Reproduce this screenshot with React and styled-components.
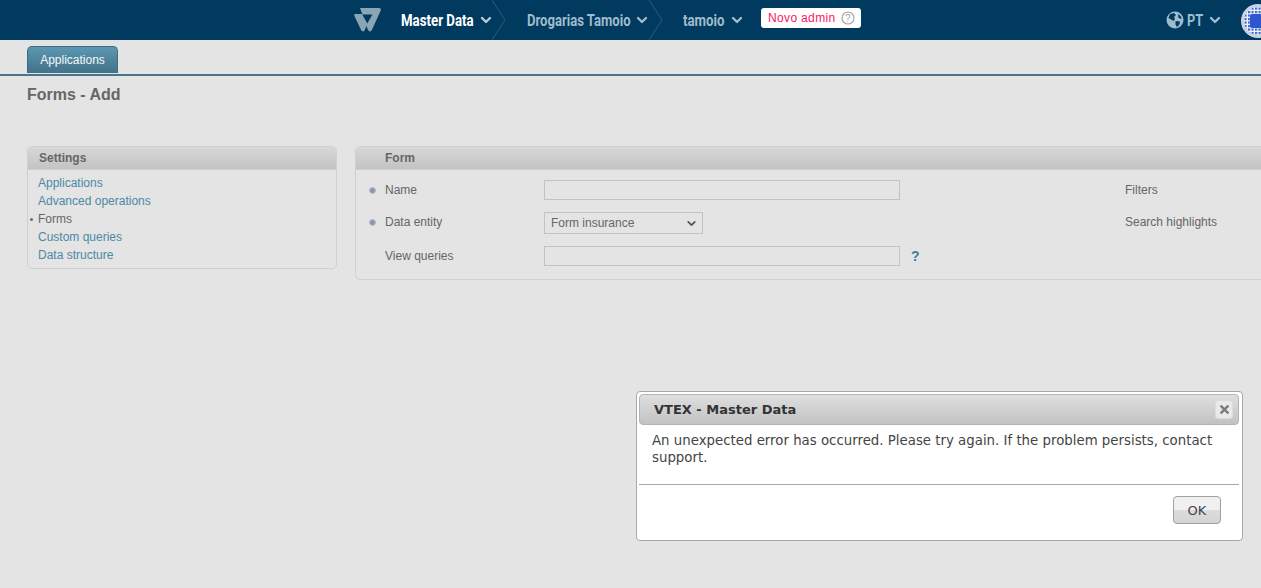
import styled, { createGlobalStyle } from "styled-components";
import { ChevronDown } from "lucide-react";
import { FaTimes } from "react-icons/fa";

const GlobalStyle = createGlobalStyle`
  html, body {
    margin: 0;
    height: 100%;
    overflow: hidden;
    background: #e4e4e4;
    font-family: "Liberation Sans", Arial, sans-serif;
  }
`;

const TopBar = styled.header`
  height: 40px;
  background: #003a5f;
  display: flex;
  align-items: center;
  padding-left: 354px;
  overflow: hidden;
`;

const Crumb = styled.div`
  display: flex;
  align-items: center;
  gap: 3px;
  height: 40px;
  margin-left: ${(p) => p.$left}px;
  color: ${(p) => (p.$active ? "#ffffff" : "#9fbccd")};
  white-space: nowrap;

  svg {
    color: ${(p) => (p.$active ? "#b7cbd8" : "#9fbccd")};
  }
`;

/* no condensed face is installed, so the header text is squeezed to the width it needs */
const CrumbText = styled.span`
  display: inline-block;
  width: ${(p) => p.$width}px;
  font-family: "Roboto", sans-serif;
  font-size: 17px;
  font-weight: 700;
  transform: scaleX(${(p) => p.$squeeze});
  transform-origin: left center;
`;

const Arrow = styled.svg`
  flex: none;
  width: 14px;
  height: 40px;
  margin-left: ${(p) => p.$left}px;
`;

const Badge = styled.div`
  display: flex;
  align-items: center;
  gap: 5px;
  height: 20px;
  width: 100px;
  box-sizing: border-box;
  margin: -4px 0 0 16px;
  padding-left: 7px;
  background: #fff;
  border-radius: 3px;
  color: #f71963;
  font-size: 12px;
  letter-spacing: 0.35px;
  white-space: nowrap;
`;

const RightGroup = styled.div`
  display: flex;
  align-items: center;
  margin-left: auto;
  margin-right: -14px;
`;

const Language = styled(Crumb)`
  margin-left: 0;
`;

const Avatar = styled.svg`
  width: 34px;
  height: 34px;
  margin: 2px 0 0 18px;
  flex: none;
`;

const TabBar = styled.nav`
  height: 28px;
  padding: 6px 0 0 27px;
  border-bottom: 2px solid #4a7488;
`;

const Tab = styled.div`
  width: 91px;
  height: 27px;
  box-sizing: border-box;
  background: linear-gradient(#5c97b1, #427289);
  border: 1px solid #3f6c82;
  border-bottom: 0;
  border-radius: 5px 5px 0 0;
  color: #f4f8fa;
  font-size: 12px;
  line-height: 26px;
  text-align: center;
`;

const Title = styled.h1`
  margin: 10px 0 0 27px;
  color: #666;
  font-size: 16px;
  line-height: 18px;
  font-weight: 700;
`;

const Columns = styled.main`
  display: flex;
  align-items: flex-start;
  gap: 18px;
  margin: 42px 0 0 27px;
`;

const Panel = styled.section`
  flex: none;
  width: ${(p) => p.$width}px;
  height: ${(p) => p.$height}px;
  box-sizing: border-box;
  border: 1px solid #d0d0d0;
  border-radius: 5px;
  overflow: hidden;
`;

const PanelHead = styled.h2`
  margin: 0;
  height: 23px;
  box-sizing: border-box;
  padding-left: ${(p) => p.$indent}px;
  background: linear-gradient(#d8d8d8, #c3c3c3);
  border-bottom: 1px solid #cfcfcf;
  color: #666;
  font-size: 12px;
  font-weight: 700;
  line-height: 22px;
`;

const Menu = styled.ul`
  list-style: none;
  margin: 0;
  padding: 4px 0 0 10px;
`;

const MenuItem = styled.li`
  position: relative;
  height: 18px;
  color: ${(p) => (p.$current ? "#666" : "#4b89a5")};
  font-size: 12px;
  line-height: 18px;

  ${(p) =>
    p.$current &&
    `&::before {
      content: "";
      position: absolute;
      left: -8px;
      top: 8px;
      width: 3px;
      height: 3px;
      border-radius: 50%;
      background: #5c7280;
    }`}
`;

const FormGrid = styled.div`
  display: grid;
  grid-template-columns: 159px 356px 1fr;
  align-items: start;
  row-gap: 12px;
  padding: 10px 0 0 29px;
`;

const Field = styled.div`
  display: flex;
  align-items: center;
  height: 20px;
  min-width: 0;
`;

const Label = styled.label`
  position: relative;
  color: #666;
  font-size: 12px;
  margin-top: -1px;

  ${(p) =>
    p.$required &&
    `&::before {
      content: "";
      position: absolute;
      left: -16px;
      top: 4px;
      width: 7px;
      height: 7px;
      box-sizing: border-box;
      border-radius: 50%;
      background: #8b97a8;
      border: 1px solid #b9c0c9;
    }`}
`;

const TextInput = styled.input`
  width: 356px;
  height: 20px;
  box-sizing: border-box;
  background: #e4e4e4;
  border: 1px solid #c2c2c2;
  padding: 0 6px;
  outline: none;
`;

const SelectBox = styled.div`
  display: flex;
  align-items: center;
  justify-content: space-between;
  width: 159px;
  height: 22px;
  box-sizing: border-box;
  border: 1px solid #c2c2c2;
  padding: 0 4px 0 6px;
  color: #666;
  font-size: 12px;
`;

const SideLabel = styled.div`
  color: #666;
  font-size: 12px;
  margin: -1px 0 0 225px;
  white-space: nowrap;
`;

const Help = styled.span`
  margin-left: 11px;
  color: #3d7f9f;
  font-size: 14px;
  font-weight: 700;
`;

const Modal = styled.div`
  position: fixed;
  left: 636px;
  top: 391px;
  width: 607px;
  height: 150px;
  box-sizing: border-box;
  padding: 2px 3px 2px 2px;
  background: #fff;
  border: 1px solid #a8a8a8;
  border-radius: 4px;
  font-family: "DejaVu Sans", Verdana, sans-serif;
  display: flex;
  flex-direction: column;
`;

const ModalHead = styled.div`
  display: flex;
  align-items: center;
  justify-content: space-between;
  height: 31px;
  box-sizing: border-box;
  padding: 0 5px 0 14px;
  background: linear-gradient(#dfdfdf, #c2c2c2);
  border: 1px solid #b4b4b4;
  border-radius: 4px;
  color: #333;
  font-size: 13px;
  font-weight: 700;
`;

const CloseButton = styled.button`
  display: grid;
  place-items: center;
  width: 18px;
  height: 19px;
  padding: 0;
  background: #e9e9e9;
  border: 1px solid #dcdcdc;
  border-radius: 3px;
  color: #7a7a7a;
`;

const ModalText = styled.p`
  margin: 0;
  height: 60px;
  box-sizing: border-box;
  padding: 7px 14px 0 13px;
  border-bottom: 1px solid #a9a9a9;
  color: #444;
  font-size: 13.33px;
  line-height: 17px;
`;

const ModalFoot = styled.div`
  display: flex;
  justify-content: flex-end;
  padding: 11px 18px 0 0;
`;

const OkButton = styled.button`
  width: 48px;
  height: 28px;
  background: linear-gradient(#f0f0f0 50%, #dcdcdc 50%, #d4d4d4);
  border: 1px solid #a0a0a0;
  border-radius: 4px;
  color: #444;
  font-family: inherit;
  font-size: 13px;
`;

const Logo = () => (
  <svg width="27" height="24" viewBox="0 0 27 24">
    <path
      d="M6 0H25C26.600 0 27.300 1.300 26.600 2.700L18 21.800C17 24 15 24 14 21.800L12 17.500 18.500 6.500H8.500Z"
      fill="#8aa5b8"
    />
    <path
      d="M1.200 6H8L13.200 15.500 11 21.800C10 24 8 24 7 21.800L.4 8C0 7 .3 6 1.200 6Z"
      fill="#8aa5b8"
    />
  </svg>
);

const Separator = ({ left }) => (
  <Arrow $left={left} viewBox="0 0 14 40">
    <path d="M0 0 13 20 0 40" fill="none" stroke="#2d5a78" strokeWidth="1" />
  </Arrow>
);

const Chevron = () => <ChevronDown size={16} strokeWidth={3.6} />;

const Globe = () => (
  <svg width="18" height="18" viewBox="0 0 18 18">
    <circle cx="9" cy="9" r="8.500" fill="#9fbccd" />
    <path
      d="M4 3 8 2 10 4 8 6 9 8 7.500 10 5 8.500 2.500 7ZM9.500 10 14 10.500 13.500 13.500 11 16 9.500 13.500ZM12 3 15 5.500 15.500 8 12.500 7Z"
      fill="#003a5f"
    />
  </svg>
);

const HelpIcon = () => (
  <svg width="14" height="14" viewBox="0 0 14 14">
    <circle cx="7" cy="7" r="6" fill="none" stroke="#a8a8a8" strokeWidth="1.200" />
    <text x="7" y="10.500" textAnchor="middle" fontSize="10" fill="#a8a8a8" fontFamily="Liberation Sans">
      ?
    </text>
  </svg>
);

const AvatarIcon = () => (
  <Avatar viewBox="0 0 34 34">
    <defs>
      <pattern id="dots" width="3.500" height="3.500" patternUnits="userSpaceOnUse">
        <rect width="3.500" height="3.500" fill="#f2f5fb" />
        <rect width="2.200" height="2.200" fill="#3d64cf" />
      </pattern>
    </defs>
    <circle cx="17" cy="17" r="17" fill="#c9d4e0" />
    <circle cx="17" cy="17" r="14" fill="url(#dots)" />
    <rect x="9" y="10" width="16" height="14" rx="2" fill="#2f55cf" />
  </Avatar>
);

const menuItems = [
  { name: "Applications" },
  { name: "Advanced operations" },
  { name: "Forms", current: true },
  { name: "Custom queries" },
  { name: "Data structure" },
];

export default function App() {
  return (
    <>
      <GlobalStyle />
      <TopBar>
        <Logo />
        <Crumb $active $left={20}>
          <CrumbText $width={74} $squeeze={0.78}>Master Data</CrumbText>
          <Chevron />
        </Crumb>
        <Separator left={-2} />
        <Crumb $left={21}>
          <CrumbText $width={104} $squeeze={0.77}>Drogarias Tamoio</CrumbText>
          <Chevron />
        </Crumb>
        <Separator left={-1} />
        <Crumb $left={20}>
          <CrumbText $width={43} $squeeze={0.78}>tamoio</CrumbText>
          <Chevron />
        </Crumb>
        <Badge>
          Novo admin <HelpIcon />
        </Badge>
        <RightGroup>
          <Language>
            <Globe />
            <CrumbText $width={17} $squeeze={0.75}>PT</CrumbText>
            <Chevron />
          </Language>
          <AvatarIcon />
        </RightGroup>
      </TopBar>

      <TabBar>
        <Tab>Applications</Tab>
      </TabBar>
      <Title>Forms - Add</Title>

      <Columns>
        <Panel $width={310} $height={123}>
          <PanelHead $indent={11}>Settings</PanelHead>
          <Menu>
            {menuItems.map((item) => (
              <MenuItem key={item.name} $current={item.current}>
                {item.name}
              </MenuItem>
            ))}
          </Menu>
        </Panel>

        <Panel $width={960} $height={134}>
          <PanelHead $indent={29}>Form</PanelHead>
          <FormGrid>
            <Field>
              <Label $required>Name</Label>
            </Field>
            <Field>
              <TextInput />
            </Field>
            <Field>
              <SideLabel>Filters</SideLabel>
            </Field>

            <Field>
              <Label $required>Data entity</Label>
            </Field>
            <SelectBox>
              Form insurance
              <ChevronDown size={13} strokeWidth={3.4} color="#555" />
            </SelectBox>
            <Field>
              <SideLabel>Search highlights</SideLabel>
            </Field>

            <Field>
              <Label>View queries</Label>
            </Field>
            <Field>
              <TextInput />
            </Field>
            <Field>
              <Help>?</Help>
            </Field>
          </FormGrid>
        </Panel>
      </Columns>

      <Modal>
        <ModalHead>
          VTEX - Master Data
          <CloseButton aria-label="Close">
            <FaTimes size={13} />
          </CloseButton>
        </ModalHead>
        <ModalText>
          An unexpected error has occurred. Please try again. If the problem persists, contact
          support.
        </ModalText>
        <ModalFoot>
          <OkButton>OK</OkButton>
        </ModalFoot>
      </Modal>
    </>
  );
}
